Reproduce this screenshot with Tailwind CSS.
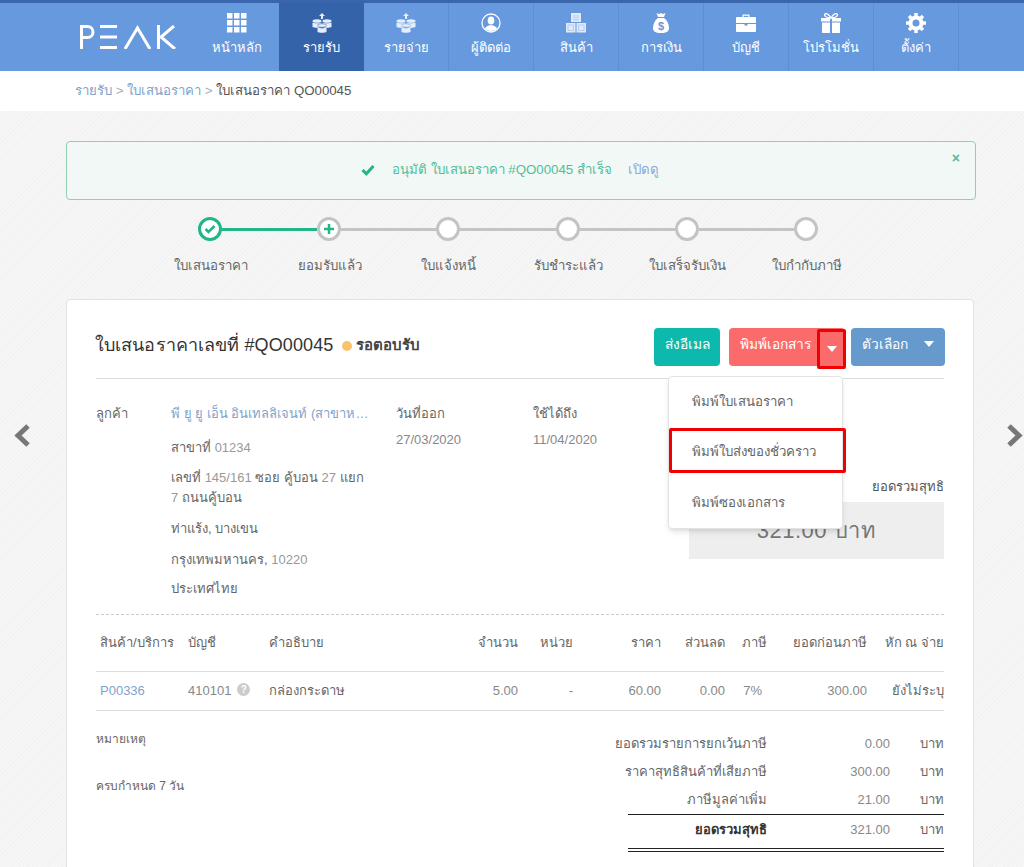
<!DOCTYPE html>
<html lang="th">
<head>
    <meta charset="UTF-8">
    <meta name="viewport" content="width=device-width, initial-scale=1.0">
    <title>PEAK</title>
    <script src="https://cdn.jsdelivr.net/npm/@tailwindcss/browser@4"></script>
</head>
<body class="relative h-[867px] overflow-hidden bg-[#f5f5f5] bg-[repeating-linear-gradient(135deg,#f6f6f6_0px,#f6f6f6_2px,#f2f2f2_2px,#f2f2f2_3px)] font-['Liberation_Sans',sans-serif] text-[13px] text-[#777]">
    <!-- Top nav -->
    <header class="h-[71px] border-t-[3px] border-[#3a66ad] bg-[#6699dd] flex text-[13px] text-white">
        <div class="w-[194px] pl-[80px] pt-[22px] shrink-0">
            <svg width="96" height="24" viewBox="0 0 96 24" fill="none" stroke="#fff" stroke-width="3">
                <path d="M1.500 24V1.500h6a5.500 5.500 0 0 1 0 11h-6"/>
                <path d="M20 1.500h17M20 12h17M20 22.500h17"/>
                <path d="M45 24L57.500 3 70 24"/>
                <path d="M78.500 0v24M94 1L81 12l14 12"/>
            </svg>
        </div>
        <a class="w-[85px] flex flex-col items-center pt-[10px]">
            <svg width="20" height="20" viewBox="0 0 20 20" fill="#fff"><path d="M0 0h5.500v5.500H0zM7 0h5.500v5.500H7zM14 0h5.500v5.500H14zM0 7h5.500v5.500H0zM7 7h5.500v5.500H7zM14 7h5.500v5.500H14zM0 14h5.500v5.500H0zM7 14h5.500v5.500H7zM14 14h5.500v5.500H14z"/></svg>
            <span class="mt-[5px] leading-[20px]">หน้าหลัก</span>
        </a>
        <a class="w-[85px] flex flex-col items-center pt-[10px] bg-[#3563a9]">
            <svg width="20" height="20" viewBox="0 0 20 20" fill="#e6eefa"><path d="M10 0l3 3h-2v3H9V3H7z"/><ellipse cx="5" cy="8" rx="4.500" ry="1.800"/><ellipse cx="15" cy="8" rx="4.500" ry="1.800"/><path d="M.5 9.500c1.500 1 7.500 1 9 0V14c-1.500 1-7.500 1-9 0zM10.500 9.500c1.500 1 7.500 1 9 0V14c-1.500 1-7.500 1-9 0z"/><ellipse cx="10" cy="12.500" rx="4.500" ry="1.800" stroke="#3563a9" stroke-width=".6"/><path d="M5.500 14.500c1.500 1 7.500 1 9 0V19c-1.500 1-7.500 1-9 0z"/></svg>
            <span class="mt-[5px] leading-[20px]">รายรับ</span>
        </a>
        <a class="w-[85px] flex flex-col items-center pt-[10px] border-r border-[#5b8ed2]">
            <svg width="20" height="20" viewBox="0 0 20 20" fill="#e6eefa"><path d="M10 0l3 3h-2v3H9V3H7z"/><ellipse cx="5" cy="8" rx="4.500" ry="1.800"/><ellipse cx="15" cy="8" rx="4.500" ry="1.800"/><path d="M.5 9.500c1.500 1 7.500 1 9 0V14c-1.500 1-7.500 1-9 0zM10.500 9.500c1.500 1 7.500 1 9 0V14c-1.500 1-7.500 1-9 0z"/><ellipse cx="10" cy="12.500" rx="4.500" ry="1.800" stroke="#6699dd" stroke-width=".6"/><path d="M5.500 14.500c1.500 1 7.500 1 9 0V19c-1.500 1-7.500 1-9 0z"/></svg>
            <span class="mt-[5px] leading-[20px]">รายจ่าย</span>
        </a>
        <a class="w-[85px] flex flex-col items-center pt-[10px] border-r border-[#5b8ed2]">
            <svg width="20" height="20" viewBox="0 0 20 20"><circle cx="10" cy="10" r="9" fill="none" stroke="#fff" stroke-width="1.300"/><ellipse cx="10" cy="7.500" rx="3.300" ry="4" fill="#fff"/><path d="M3.800 16c.5-2.500 3.200-3 4.700-3.800h3c1.500.8 4.200 1.300 4.700 3.800-3 2.500-9.400 2.500-12.400 0z" fill="#fff"/></svg>
            <span class="mt-[5px] leading-[20px]">ผู้ติดต่อ</span>
        </a>
        <a class="w-[85px] flex flex-col items-center pt-[10px] border-r border-[#5b8ed2]">
            <svg width="20" height="20" viewBox="0 0 20 20"><path d="M5 0h10v9H5zM0 10h9.500v9.500H0zM10.500 10H20v9.500h-9.500z" fill="#dfe9f8"/><path d="M7 3h6M7 5h6M7 7h6M2 12h5.500v5.500H2zM12.500 12H18v5.500h-5.500z" fill="none" stroke="#a9c5ec" stroke-width=".8"/></svg>
            <span class="mt-[5px] leading-[20px]">สินค้า</span>
        </a>
        <a class="w-[85px] flex flex-col items-center pt-[10px] border-r border-[#5b8ed2]">
            <svg width="16" height="20" viewBox="0 0 16 20"><path d="M3.500 0l2.500 1 2-1 2 1 2.500-1-1.500 4h-6zM5 5h6c3 2 5 6 5 10 0 3-2 5-8 5s-8-2-8-5c0-4 2-8 5-10z" fill="#fff"/><text x="8" y="17" font-size="11" font-weight="700" text-anchor="middle" fill="#6699dd">$</text></svg>
            <span class="mt-[5px] leading-[20px]">การเงิน</span>
        </a>
        <a class="w-[85px] flex flex-col items-center pt-[10px] border-r border-[#5b8ed2]">
            <svg width="20" height="20" viewBox="0 0 20 20" fill="#fff"><path d="M6.500 4V1.500h7V4h-1.200V2.700H7.700V4zM1 4h18c.5 0 1 .5 1 1v5H0V5c0-.5.500-1 1-1zM0 11h8.500v1.500h3V11H20v7c0 .5-.5 1-1 1H1c-.5 0-1-.5-1-1z"/></svg>
            <span class="mt-[5px] leading-[20px]">บัญชี</span>
        </a>
        <a class="w-[85px] flex flex-col items-center pt-[10px] border-r border-[#5b8ed2]">
            <svg width="20" height="20" viewBox="0 0 20 20" fill="#fff"><path d="M0 5h9v3.500H0zM11 5h9v3.500h-9zM1 9.500h8V20H1zM11 9.500h8V20h-8z"/><path d="M10 5C8 1 5 0 4 1s0 4 6 4c6 0 7-3 6-4s-4 0-6 4z" fill="none" stroke="#fff" stroke-width="1.300"/></svg>
            <span class="mt-[5px] leading-[20px]">โปรโมชั่น</span>
        </a>
        <a class="w-[85px] flex flex-col items-center pt-[10px] border-r border-[#5b8ed2]">
            <svg width="20" height="20" viewBox="0 0 20 20"><circle cx="10" cy="10" r="5.500" fill="none" stroke="#fff" stroke-width="4"/><path d="M10 10L10 0M10 10L10 20M10 10L0 10M10 10L20 10M10 10L3 3M10 10L17 3M10 10L3 17M10 10L17 17" stroke="#fff" stroke-width="3.500" stroke-dasharray="0 7 3"/></svg>
            <span class="mt-[5px] leading-[20px]">ตั้งค่า</span>
        </a>
    </header>

    <!-- Breadcrumb -->
    <nav class="h-[40px] bg-white pl-[75px] pt-[10px] text-[13.250px] leading-[20px] text-[#aab]">
        <span class="text-[#7fa3cc]">รายรับ</span> &gt; <span class="text-[#7fa3cc]">ใบเสนอราคา</span> &gt; <span class="text-[#555]">ใบเสนอราคา QO00045</span>
    </nav>

    <main class="pl-[66px] w-[976px] pt-[30px]">
        <!-- Success alert -->
        <div class="relative h-[59px] w-[910px] rounded-[4px] border border-[#8fcfb2] bg-[#f2f8f5] flex items-center pl-[294px] pb-[2px] text-[13.250px] text-[#4fbf9a]">
            <svg class="mr-[17px]" width="14" height="12" viewBox="0 0 14 12"><path d="M1.500 6l3.800 3.800L12.500 2" fill="none" stroke="#22b58a" stroke-width="3"/></svg>
            <span>อนุมัติ ใบเสนอราคา #QO00045 สำเร็จ</span>
            <span class="ml-[16px] text-[#8aa9d9]">เปิดดู</span>
            <span class="absolute right-[15px] top-[6px] text-[14px] font-bold text-[#5cb99a]">×</span>
        </div>

        <!-- Stepper -->
        <div class="mt-[16px] ml-[132px] w-[620px] h-[83px]">
            <div class="flex items-center h-[26px]">
                <span class="size-[24px] shrink-0 rounded-full border-[3px] border-[#22b58a] bg-white flex items-center justify-center">
                    <svg width="12" height="10" viewBox="0 0 12 10"><path d="M1.500 5l3 3L10.500 2" fill="none" stroke="#22b58a" stroke-width="2.500"/></svg>
                </span>
                <span class="h-[3px] w-[95.200px] bg-[#22b58a]"></span>
                <span class="size-[24px] shrink-0 rounded-full border-[3px] border-[#c4c4c4] bg-white flex items-center justify-center">
                    <svg width="12" height="12" viewBox="0 0 12 12"><path d="M6 1v10M1 6h10" stroke="#22b58a" stroke-width="2.500"/></svg>
                </span>
                <span class="h-[3px] w-[95.200px] bg-[#c4c4c4]"></span>
                <span class="size-[24px] shrink-0 rounded-full border-[3px] border-[#c4c4c4] bg-white"></span>
                <span class="h-[3px] w-[95.200px] bg-[#c4c4c4]"></span>
                <span class="size-[24px] shrink-0 rounded-full border-[3px] border-[#c4c4c4] bg-white"></span>
                <span class="h-[3px] w-[95.200px] bg-[#c4c4c4]"></span>
                <span class="size-[24px] shrink-0 rounded-full border-[3px] border-[#c4c4c4] bg-white"></span>
                <span class="h-[3px] w-[95.200px] bg-[#c4c4c4]"></span>
                <span class="size-[24px] shrink-0 rounded-full border-[3px] border-[#c4c4c4] bg-white"></span>
            </div>
            <div class="mt-[14px] -ml-[47px] flex text-center text-[13.250px] leading-[20px] text-[#666]">
                <span class="w-[119.200px] shrink-0">ใบเสนอราคา</span>
                <span class="w-[119.200px] shrink-0">ยอมรับแล้ว</span>
                <span class="w-[119.200px] shrink-0">ใบแจ้งหนี้</span>
                <span class="w-[119.200px] shrink-0">รับชำระแล้ว</span>
                <span class="w-[119.200px] shrink-0">ใบเสร็จรับเงิน</span>
                <span class="w-[119.200px] shrink-0">ใบกำกับภาษี</span>
            </div>
        </div>

        <!-- Quotation card -->
        <section class="w-[908px] h-[600px] rounded-t-[4px] border border-[#e2e2e2] bg-white px-[29px]">
            <div class="h-[79px] border-b border-[#ddd] flex items-start pt-[28px]">
                <h1 class="-ml-[1px] text-[18px] leading-[34px] tracking-[0.1px] text-[#333]">ใบเสนอราคาเลขที่ #QO00045</h1>
                <span class="ml-[9px] mt-[13px] size-[10px] rounded-full bg-[#fbc26b]"></span>
                <span class="ml-[4px] mt-[7px] text-[15px] leading-[20px] font-bold text-[#444]">รอตอบรับ</span>
                <div class="ml-auto -mr-[1px] flex text-white text-[13.750px]">
                    <button class="h-[38px] w-[66px] pb-[3px] rounded-[4px] bg-[#0cb9ac]">ส่งอีเมล</button>
                    <button class="ml-[9px] h-[38px] w-[116px] pb-[3px] rounded-[4px] bg-[#fb6b6b] relative text-left pl-[11px]">
                        พิมพ์เอกสาร
                        <span class="absolute right-[-1px] top-[1px] h-[40px] w-[29px] border-[3px] border-[#f00000] rounded-[2px] flex items-center justify-center">
                            <svg width="10" height="6" viewBox="0 0 10 6" fill="#fff"><path d="M0 0h10L5 6z"/></svg>
                        </span>
                    </button>
                    <button class="ml-[6px] h-[38px] w-[94px] pb-[3px] rounded-[4px] bg-[#6699cc] flex items-center justify-between pl-[11px] pr-[11px]">
                        ตัวเลือก
                        <svg class="-mt-[3px]" width="10" height="6" viewBox="0 0 10 6" fill="#fff"><path d="M0 0h10L5 6z"/></svg>
                    </button>
                </div>
            </div>

            <!-- Customer info -->
            <div class="h-[236px] border-b border-dashed border-[#ccc] flex pt-[25px] text-[13px] leading-[20px] text-[#666]">
                <div class="w-[75px]">ลูกค้า</div>
                <div class="w-[225px]">
                    <div class="w-[202px] truncate text-[#7fa3cc]">พี ยู ยู เอ็น อินเทลลิเจนท์ (สาขาหลักที่หนึ่ง)</div>
                    <p class="mt-[14px]">สาขาที่ <span class="text-[#999]">01234</span></p>
                    <p class="mt-[10px] w-[202px]">เลขที่ <span class="text-[#999]">145/161</span> ซอย คู้บอน <span class="text-[#999]">27</span> แยก <span class="text-[#999]">7</span> ถนนคู้บอน</p>
                    <p class="mt-[11px]">ท่าแร้ง, บางเขน</p>
                    <p class="mt-[11px]">กรุงเทพมหานคร, <span class="text-[#999]">10220</span></p>
                    <p class="mt-[9px]">ประเทศไทย</p>
                </div>
                <div class="w-[137px]">
                    <div>วันที่ออก</div>
                    <div class="mt-[6px] text-[#888]">27/03/2020</div>
                </div>
                <div class="w-[156px]">
                    <div>ใช้ได้ถึง</div>
                    <div class="mt-[6px] text-[#888]">11/04/2020</div>
                </div>
                <div class="w-[255px] pt-[64px]">
                    <div class="mt-[9px] text-right text-[#555]">ยอดรวมสุทธิ</div>
                    <div class="mt-[5px] h-[57px] bg-[#eee] flex items-center justify-center text-[22px] tracking-[0.5px] text-[#777]">321.00 บาท</div>
                </div>
            </div>

            <!-- Line items -->
            <div class="grid grid-cols-[92px_81px_201px_48px_55px_88px_64px_42px_100px_77px] text-[13px] text-[#666]">
                <div class="h-[57px] border-b border-[#ddd] pl-[4px] pt-[18px] whitespace-nowrap">สินค้า/บริการ</div>
                <div class="h-[57px] border-b border-[#ddd] pt-[18px]">บัญชี</div>
                <div class="h-[57px] border-b border-[#ddd] pt-[18px]">คำอธิบาย</div>
                <div class="h-[57px] border-b border-[#ddd] pt-[18px] text-right">จำนวน</div>
                <div class="h-[57px] border-b border-[#ddd] pt-[18px] text-right">หน่วย</div>
                <div class="h-[57px] border-b border-[#ddd] pt-[18px] text-right">ราคา</div>
                <div class="h-[57px] border-b border-[#ddd] pt-[18px] text-right">ส่วนลด</div>
                <div class="h-[57px] border-b border-[#ddd] pt-[18px] text-right">ภาษี</div>
                <div class="h-[57px] border-b border-[#ddd] pt-[18px] text-right whitespace-nowrap">ยอดก่อนภาษี</div>
                <div class="h-[57px] border-b border-[#ddd] pt-[18px] text-right whitespace-nowrap">หัก ณ จ่าย</div>

                <div class="h-[39px] border-b border-[#ddd] pl-[4px] pt-[9px] text-[#7fa3cc]">P00336</div>
                <div class="h-[39px] border-b border-[#ddd] pt-[9px] flex items-start gap-[6px] text-[#888]">410101
                    <span class="mt-[2px] size-[13px] rounded-full bg-[#ccc] text-white text-[10px] leading-[13px] text-center font-bold">?</span>
                </div>
                <div class="h-[39px] border-b border-[#ddd] pt-[9px]">กล่องกระดาษ</div>
                <div class="h-[39px] border-b border-[#ddd] pt-[9px] text-right text-[#888]">5.00</div>
                <div class="h-[39px] border-b border-[#ddd] pt-[9px] text-right text-[#888]">-</div>
                <div class="h-[39px] border-b border-[#ddd] pt-[9px] text-right text-[#888]">60.00</div>
                <div class="h-[39px] border-b border-[#ddd] pt-[9px] text-right text-[#888]">0.00</div>
                <div class="h-[39px] border-b border-[#ddd] pt-[9px] text-right text-[#888] pr-[5px]">7%</div>
                <div class="h-[39px] border-b border-[#ddd] pt-[9px] text-right text-[#888]">300.00</div>
                <div class="h-[39px] border-b border-[#ddd] pt-[9px] text-right whitespace-nowrap">ยังไม่ระบุ</div>
            </div>

            <!-- Notes and totals -->
            <div class="flex pt-[19px] text-[#666]">
                <div class="w-[532px] text-[12px] leading-[18px]">
                    <p>หมายเหตุ</p>
                    <p class="mt-[29px]">ครบกำหนด 7 วัน</p>
                </div>
                <div class="w-[316px] text-[13px]">
                    <div class="grid grid-cols-[139px_123px_54px] h-[28px] leading-[28px] text-right whitespace-nowrap"><span class="justify-self-end">ยอดรวมรายการยกเว้นภาษี</span><span class="text-[#888]">0.00</span><span>บาท</span></div>
                    <div class="grid grid-cols-[139px_123px_54px] h-[28px] leading-[28px] text-right whitespace-nowrap"><span class="justify-self-end">ราคาสุทธิสินค้าที่เสียภาษี</span><span class="text-[#888]">300.00</span><span>บาท</span></div>
                    <div class="grid grid-cols-[139px_123px_54px] h-[29px] leading-[28px] text-right whitespace-nowrap border-b border-[#222]"><span class="justify-self-end">ภาษีมูลค่าเพิ่ม</span><span class="text-[#888]">21.00</span><span>บาท</span></div>
                    <div class="grid grid-cols-[139px_123px_54px] h-[34px] leading-[30px] text-right whitespace-nowrap border-b border-[#222]"><span class="justify-self-end font-bold text-[#333]">ยอดรวมสุทธิ</span><span class="text-[#888]">321.00</span><span>บาท</span></div>
                    <div class="mt-[2px] border-b border-[#222]"></div>
                </div>
            </div>
        </section>
    </main>

    <!-- Print dropdown -->
    <div class="absolute left-[668px] top-[376px] h-[153px] w-[175px] rounded-[4px] border border-[#e4e4e4] bg-white shadow-md text-[13.250px] text-[#666]">
        <div class="h-[50px] pl-[23px] pt-[15px]">พิมพ์ใบเสนอราคา</div>
        <div class="h-[51px] pl-[23px] pt-[15px]">พิมพ์ใบส่งของชั่วคราว</div>
        <div class="h-[50px] pl-[23px] pt-[15px]">พิมพ์ซองเอกสาร</div>
    </div>
    <div class="absolute left-[669px] top-[428px] h-[45px] w-[177px] rounded-[2px] border-[3px] border-[#f00000]"></div>

    <!-- Prev / next arrows -->
    <svg class="absolute left-[13px] top-[423px]" width="18" height="25" viewBox="0 0 18 25"><path d="M15 3L5 12.500 15 22" fill="none" stroke="#777" stroke-width="5"/></svg>
    <svg class="absolute left-[1006px] top-[423px]" width="18" height="25" viewBox="0 0 18 25"><path d="M3 3l10 9.500L3 22" fill="none" stroke="#777" stroke-width="5"/></svg>
</body>
</html>
